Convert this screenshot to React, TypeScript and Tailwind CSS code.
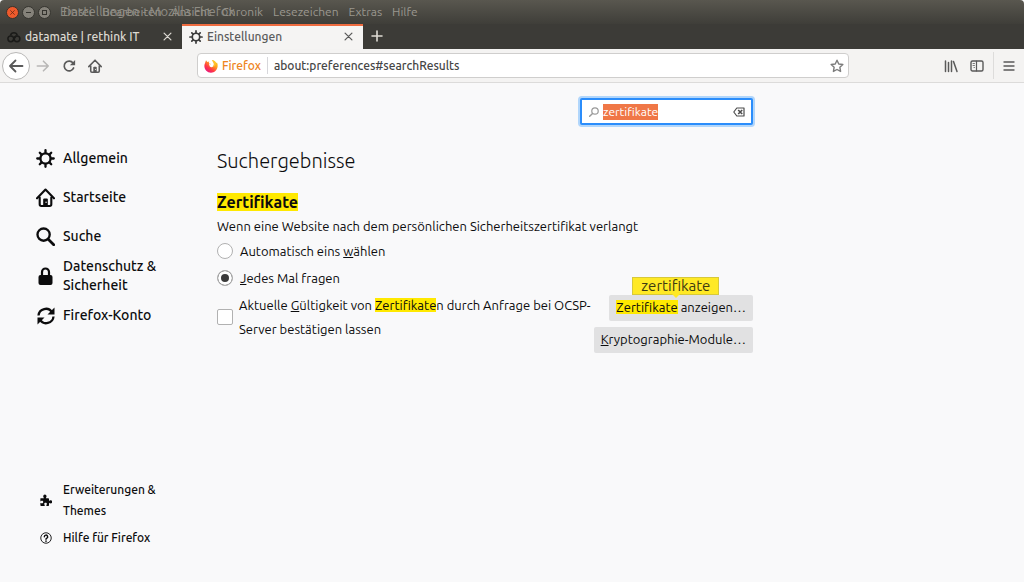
import { useEffect, useRef, useState } from "react";
import type { ReactNode } from "react";

type IconProps = { className?: string };

const MENU = ["Datei", "Bearbeiten", "Ansicht", "Chronik", "Lesezeichen", "Extras", "Hilfe"];

function GearIcon({ className }: IconProps) {
  return (
    <svg viewBox="0 0 18 18" className={className} fill="none" stroke="currentColor" strokeWidth="2.2" strokeLinecap="round">
      <circle cx="9" cy="9" r="4.8" />
      <path d="M9 3.500V1.200M9 16.800v-2.300M3.500 9H1.200M16.800 9h-2.300M5.300 5.300 3.600 3.600M14.400 14.400l-1.700-1.700M5.300 12.700l-1.700 1.700M14.400 3.600l-1.700 1.700" />
    </svg>
  );
}

function HomeIcon({ className }: IconProps) {
  return (
    <svg viewBox="0 0 18 18" className={className} fill="none" stroke="currentColor" strokeWidth="2" strokeLinecap="round" strokeLinejoin="round">
      <path d="M1 9.800 9 1.500l8 8.300" />
      <path d="M3.500 9V15.500q0 1.500 1.500 1.500h8q1.500 0 1.500-1.500V9" />
      <path d="M6.800 17v-6q0-1 1-1h2.400q1 0 1 1v6z" fill="currentColor" stroke="none" />
      <path d="M9.500 13.500h.1" stroke="#f9f9fa" strokeWidth="1.200" />
    </svg>
  );
}

function SearchIcon({ className }: IconProps) {
  return (
    <svg viewBox="0 0 18 18" className={className} fill="none" stroke="currentColor" strokeWidth="2.2" strokeLinecap="round">
      <circle cx="7.200" cy="7.200" r="5.800" />
      <path d="m11.600 11.600 5.200 5.200" strokeWidth="2.600" />
    </svg>
  );
}

function LockIcon({ className }: IconProps) {
  return (
    <svg viewBox="0 0 15 18" className={className}>
      <path d="M4 9V5a3.500 3.500 0 0 1 7 0v4" fill="none" stroke="currentColor" strokeWidth="2.200" />
      <rect x="0.500" y="8" width="14" height="10" rx="2" fill="currentColor" />
    </svg>
  );
}

function SyncIcon({ className }: IconProps) {
  return (
    <svg viewBox="0 0 18 18" className={className} fill="none" stroke="currentColor" strokeWidth="2.300">
      <path d="M1.500 8.500a7.300 7.300 0 0 1 13.600-3" />
      <path d="M16.500 9.500a7.300 7.300 0 0 1-13.600 3" />
      <path d="M17.500.5V7.500H10.500z" fill="currentColor" stroke="none" />
      <path d="M.5 17.500v-7h7z" fill="currentColor" stroke="none" />
    </svg>
  );
}

function PuzzleIcon({ className }: IconProps) {
  return (
    <svg viewBox="0 0 16 16" className={className} fill="currentColor">
      <path d="M1 5.500h4.200C5 4.800 4.300 4.300 4.300 3a2.200 2.200 0 0 1 4.400 0c0 1.300-.7 1.800-.9 2.500H11q1 0 1 1v2.700c.7-.2 1.200-.9 2.200-.9a2 2 0 0 1 0 4.200c-1 0-1.500-.7-2.200-.9V15q0 1-1 1H8.500v-.8c0-1 .7-1.200.7-2.200 0-.8-.8-1.400-1.800-1.400s-1.800.6-1.800 1.400c0 1 .7 1.200.7 2.200v.8H1.500q-1 0-1-1v-3.500c.8.2 1.200.9 2.200.9.900 0 1.600-.7 1.600-1.700S3.600 9 2.700 9C1.700 9 1.300 9.700.5 9.900V6z" />
    </svg>
  );
}

function HelpIcon({ className }: IconProps) {
  return (
    <svg viewBox="0 0 16 16" className={className} fill="none" stroke="currentColor">
      <circle cx="8" cy="8" r="7" strokeWidth="1.200" />
      <path d="M5.800 6.300a2.200 2.200 0 1 1 3.300 1.900q-1.100.6-1.100 1.500" strokeWidth="1.900" strokeLinecap="round" />
      <circle cx="8" cy="12.200" r="1.100" fill="currentColor" stroke="none" />
    </svg>
  );
}

function BackIcon({ className }: IconProps) {
  return (
    <svg viewBox="0 0 16 16" className={className} fill="none" stroke="currentColor" strokeWidth="1.800" strokeLinecap="round" strokeLinejoin="round">
      <path d="M14.500 8H2M7.500 2.500 2 8l5.500 5.500" />
    </svg>
  );
}

function ReloadIcon({ className }: IconProps) {
  return (
    <svg viewBox="0 0 16 16" className={className}>
      <path d="M13.300 10.200A5.600 5.600 0 1 1 12.600 4.600" fill="none" stroke="currentColor" strokeWidth="1.900" strokeLinecap="round" />
      <path d="M15 1v6H9z" fill="currentColor" />
    </svg>
  );
}

function CloseIcon({ className }: IconProps) {
  return (
    <svg viewBox="0 0 10 10" className={className} fill="none" stroke="currentColor" strokeWidth="1.400" strokeLinecap="round">
      <path d="m1.200 1.200 7.600 7.600M8.800 1.200 1.200 8.800" />
    </svg>
  );
}

function CloudIcon({ className }: IconProps) {
  return (
    <svg viewBox="0 0 14 12" className={className} fill="none" stroke="currentColor" strokeWidth="1.500">
      <circle cx="3.800" cy="7.800" r="2.900" />
      <circle cx="10" cy="7.800" r="2.900" />
      <path d="M3.500 4.500a3.500 3.500 0 0 1 6.800 0M5.800 9.800 9 5" />
    </svg>
  );
}

function FirefoxIcon({ className }: IconProps) {
  return (
    <svg viewBox="0 0 16 16" className={className}>
      <defs>
        <linearGradient id="fox" x1="1" y1="0" x2="0.2" y2="1">
          <stop offset="0" stopColor="#ffe226" />
          <stop offset="0.4" stopColor="#ff9a1f" />
          <stop offset="0.7" stopColor="#ff3647" />
          <stop offset="1" stopColor="#e31587" />
        </linearGradient>
      </defs>
      <path
        d="M1.200 4.500 2.300 1.500l1.500 1.900 2.200-.6c-.7 1-.5 1.900.2 2.300l1.900.5c0 .9-1.700 1-1.900 2.200.5 1.900 3.200 2.200 4.300.6 1.500-2 .5-4.800-1.600-6.900 3.200.2 4.600 2 5.100 3.100l.9-.6c.7 1.400.9 3 .7 4.500-.6 4.200-3.700 7.100-7.600 7.100C3.800 15.600.4 12.200.4 8c0-1.300.3-2.500.8-3.500z"
        fill="url(#fox)"
      />
      <path d="M8.900 1.500c2.500 1.800 3.600 5.200 1.500 7.500 3-.8 4-4.200 2.400-6C11.900 2 10.400 1.500 8.900 1.500z" fill="#ffc42b" />
      <path d="M6.200 5.100l1.900.5c0 .9-1.700 1-1.900 2.200-.5-1-.5-2 0-2.700z" fill="#ffffff" />
    </svg>
  );
}

function StarIcon({ className }: IconProps) {
  return (
    <svg viewBox="0 0 16 16" className={className} fill="none" stroke="currentColor" strokeWidth="1.600" strokeLinejoin="round">
      <path d="m8 1.400 2 4.300 4.700.6-3.400 3.200.8 4.700L8 12l-4.100 2.200.8-4.700L1.300 6.300 6 5.700z" />
    </svg>
  );
}

function LibraryIcon({ className }: IconProps) {
  return (
    <svg viewBox="0 0 14 14" className={className} fill="none" stroke="currentColor" strokeWidth="1.500" strokeLinecap="round">
      <path d="M1.500 2v10.500M4.500 3.500v9M7.500 2v10.500M9.500 2.500l3.500 10" />
    </svg>
  );
}

function SidebarIcon({ className }: IconProps) {
  return (
    <svg viewBox="0 0 14 14" className={className} fill="none" stroke="currentColor" strokeLinecap="round">
      <rect x="1" y="2" width="12" height="10" rx="1.500" strokeWidth="1.400" />
      <path d="M6.500 2v10" strokeWidth="1.200" />
      <path d="M3 4.500h1.500M3 6.500h1.500M4 8.500h.5" strokeWidth="0.800" />
    </svg>
  );
}

function ClearIcon({ className }: IconProps) {
  return (
    <svg viewBox="0 0 12 10" className={className} fill="none" stroke="currentColor" strokeWidth="1.200" strokeLinejoin="round">
      <path d="M3.800 1h7.200v8H3.800L.8 5z" />
      <path d="m5.200 3 4 4M9.200 3l-4 4" strokeWidth="1.600" />
    </svg>
  );
}

function NavItem({ icon, children }: { icon: ReactNode; children: ReactNode }) {
  return (
    <a href="#" className="flex min-h-[39px] items-center gap-2 py-px text-sm leading-[19px] font-medium">
      <span className="flex w-[19px] shrink-0 justify-center">{icon}</span>
      <span>{children}</span>
    </a>
  );
}

function Hit({ children }: { children: ReactNode }) {
  return <mark className="bg-[#ffe900] text-inherit">{children}</mark>;
}

export default function App() {
  const searchRef = useRef<HTMLInputElement>(null);
  const [query, setQuery] = useState("zertifikate");
  const [choice, setChoice] = useState("ask");

  useEffect(() => {
    searchRef.current?.focus();
    searchRef.current?.select();
  }, []);

  return (
    <div className="flex min-h-screen flex-col bg-[#f9f9fa] font-['Ubuntu','Open_Sans',sans-serif] text-[#0c0c0d]">
      <header>
        <div className="relative flex h-6 items-center rounded-t bg-linear-to-b from-[#59574f] to-[#3f3e39] pl-[6px] text-xs text-[#9a978f]">
          <div className="flex gap-[3px]">
            <button aria-label="Schließen" className="flex size-[13px] items-center justify-center rounded-full border border-[#3a322c] bg-[#ee5a2c] text-[#5c2413]">
              <CloseIcon className="size-[5px]" />
            </button>
            <button aria-label="Minimieren" className="flex size-[13px] items-center justify-center rounded-full border border-[#35342f] bg-[#85827a]">
              <span className="h-px w-[5px] bg-[#35342f]"></span>
            </button>
            <button aria-label="Maximieren" className="flex size-[13px] items-center justify-center rounded-full border border-[#35342f] bg-[#85827a]">
              <span className="size-[5px] border border-[#35342f]"></span>
            </button>
          </div>
          <span className="absolute left-[60px] text-[13px] text-[#8f8c84]">Einstellungen - Mozilla Firefox</span>
          <nav className="ml-3 flex gap-[10px]">
            {MENU.map((item) => (
              <button key={item}>{item}</button>
            ))}
          </nav>
        </div>

        <div className="flex h-[25px] items-stretch bg-[#3c3b37] text-xs">
          <div className="flex w-[182px] items-center gap-1 pr-[10px] pl-[7px] font-medium text-[#dcd9d2]">
            <CloudIcon className="h-3 w-[14px] text-[#1b1b19]" />
            <span className="flex-1">datamate | rethink IT</span>
            <button aria-label="Tab schließen">
              <CloseIcon className="size-[9px]" />
            </button>
          </div>
          <div className="flex w-[181px] items-center gap-1 border-t-2 border-[#ee6b3f] bg-[#f5f4f3] pr-[10px] pb-[2px] pl-[7px] font-medium text-[#5a5a5a]">
            <GearIcon className="size-[14px] text-[#3a3a3a]" />
            <span className="flex-1">Einstellungen</span>
            <button aria-label="Tab schließen">
              <CloseIcon className="size-[9px]" />
            </button>
          </div>
          <button aria-label="Neuer Tab" className="px-2 pb-[2px] text-[#dedbd4]">
            <svg viewBox="0 0 12 12" className="size-3" stroke="currentColor" strokeWidth="1.600" strokeLinecap="round">
              <path d="M6 1v10M1 6h10" />
            </svg>
          </button>
        </div>

        <div className="flex h-[34px] items-center border-b border-[#dcdbda] bg-[#f4f3f2] pr-[9px] pl-[2px] text-[#5a5a5a]">
          <button aria-label="Zurück" className="flex size-7 items-center justify-center rounded-full border border-[#b9b8b7] bg-white">
            <BackIcon className="size-4" />
          </button>
          <button aria-label="Vor" className="ml-[6px] text-[#b8b7b6]">
            <BackIcon className="size-[14px] rotate-180" />
          </button>
          <button aria-label="Neu laden" className="ml-3">
            <ReloadIcon className="size-[14px]" />
          </button>
          <button aria-label="Startseite" className="ml-3">
            <HomeIcon className="size-[14px]" />
          </button>
          <div className="mx-[95px] flex h-[25px] flex-1 items-center rounded border border-[#cfcecd] bg-white pr-1 pl-[6px] text-xs font-medium">
            <FirefoxIcon className="size-[14px] shrink-0" />
            <span className="ml-1 text-[#ee8420]">Firefox</span>
            <span className="mx-[6px] h-[17px] w-px bg-[#d7d7db]"></span>
            <input
              aria-label="Adresse"
              defaultValue="about:preferences#searchResults"
              className="min-w-0 flex-1 bg-transparent text-[#454545] outline-none"
            />
            <button aria-label="Lesezeichen hinzufügen" className="text-[#7c7c7c]">
              <StarIcon className="size-[14px]" />
            </button>
          </div>
          <button aria-label="Bibliothek">
            <LibraryIcon className="size-[14px]" />
          </button>
          <button aria-label="Sidebars" className="ml-3">
            <SidebarIcon className="size-[14px]" />
          </button>
          <span className="mx-[9px] h-[27px] w-px bg-[#dddcdb]"></span>
          <button aria-label="Menü">
            <svg viewBox="0 0 12 12" className="size-3" stroke="currentColor" strokeWidth="1.400" strokeLinecap="round">
              <path d="M1 2h10M1 6h10M1 10h10" />
            </svg>
          </button>
        </div>
      </header>

      <div className="flex flex-1">
        <aside className="flex w-[217px] shrink-0 flex-col justify-between pt-14 pr-12 pb-[34px] pl-9">
          <nav>
            <NavItem icon={<GearIcon className="size-[19px]" />}>Allgemein</NavItem>
            <NavItem icon={<HomeIcon className="size-[19px]" />}>Startseite</NavItem>
            <NavItem icon={<SearchIcon className="size-[19px]" />}>Suche</NavItem>
            <NavItem icon={<LockIcon className="h-[18px] w-[15px]" />}>Datenschutz &amp; Sicherheit</NavItem>
            <NavItem icon={<SyncIcon className="size-[18px]" />}>Firefox-Konto</NavItem>
          </nav>
          <nav className="flex flex-col gap-[6px] text-xs leading-[21px] font-medium">
            <a href="#" className="flex items-center gap-2">
              <span className="flex w-[19px] shrink-0 justify-center">
                <PuzzleIcon className="size-3" />
              </span>
              Erweiterungen &amp; Themes
            </a>
            <a href="#" className="flex items-center gap-2">
              <span className="flex w-[19px] shrink-0 justify-center">
                <HelpIcon className="size-3" />
              </span>
              Hilfe für Firefox
            </a>
          </nav>
        </aside>

        <main className="max-w-[536px] flex-1 pt-[15px] text-[13px]">
          <div className="flex justify-end">
            <div className="flex h-[27px] w-[173px] items-center rounded-xs border-2 border-[#2b8dfb] bg-white pr-[6px] pl-[7px] text-xs ring-2 ring-[#0a84ff]/30">
              <SearchIcon className="size-[10px] shrink-0 -scale-x-100 text-[#9a9a9a]" />
              <input
                ref={searchRef}
                aria-label="In Einstellungen suchen"
                value={query}
                onChange={(e) => setQuery(e.target.value)}
                className="ml-1 min-w-0 flex-1 bg-transparent outline-none selection:bg-[#f07746] selection:text-white"
              />
              <button aria-label="Leeren" onClick={() => setQuery("")} className="text-[#4c4c4c]">
                <ClearIcon className="h-[10px] w-3" />
              </button>
            </div>
          </div>

          <h1 className="mt-5 text-xl leading-8 font-light">Suchergebnisse</h1>
          <h2 className="mt-[15px] text-base leading-5 font-bold">
            <Hit>Zertifikate</Hit>
          </h2>

          <p className="mt-[2px] leading-6">Wenn eine Website nach dem persönlichen Sicherheitszertifikat verlangt</p>
          <div className="mt-px flex flex-col gap-[3px]">
            <label className="flex items-center gap-[7px] leading-6">
              <input
                type="radio"
                name="cert"
                checked={choice === "auto"}
                onChange={() => setChoice("auto")}
                className="size-4 appearance-none rounded-full border border-[#b1b1b1] bg-white checked:bg-[#3a3a3a] checked:shadow-[inset_0_0_0_3px_white]"
              />
              <span>
                Automatisch eins <u>w</u>ählen
              </span>
            </label>
            <label className="flex items-center gap-[7px] leading-6">
              <input
                type="radio"
                name="cert"
                checked={choice === "ask"}
                onChange={() => setChoice("ask")}
                className="size-4 appearance-none rounded-full border border-[#b1b1b1] bg-white checked:bg-[#3a3a3a] checked:shadow-[inset_0_0_0_3px_white]"
              />
              <span>
                <u>J</u>edes Mal fragen
              </span>
            </label>
          </div>

          <div className="mt-[3px] flex items-start justify-between">
            <label className="flex max-w-[376px] flex-1 items-center gap-[6px] leading-6">
              <input type="checkbox" className="size-4 shrink-0 appearance-none rounded-xs border border-[#b1b1b1] bg-white checked:bg-[#3a3a3a]" />
              <span>
                Aktuelle <u>G</u>ültigkeit von <Hit>Zertifikate</Hit>n durch Anfrage bei OCSP-Server bestätigen lassen
              </span>
            </label>
            <div className="mt-[2px] flex shrink-0 flex-col items-end gap-[6px] whitespace-nowrap">
              <div className="relative">
                <button className="h-[26px] rounded-xs bg-[#e1e1e2] px-[7px]">
                  <Hit>Zertifikate</Hit> anzeigen…
                </button>
                <div className="absolute bottom-full left-[23px] h-[18px] border border-[#d7c93a] bg-[#ffe925] px-2 text-[15px] leading-4 text-[#3d3a12]">
                  zertifikate
                  <span className="absolute top-full left-1/2 -translate-x-1/2 border-x-4 border-t-4 border-x-transparent border-t-[#ffe925]"></span>
                </div>
              </div>
              <button className="h-[26px] rounded-xs bg-[#e1e1e2] px-[7px]">
                <u>K</u>ryptographie-Module…
              </button>
            </div>
          </div>
        </main>
      </div>
    </div>
  );
}
